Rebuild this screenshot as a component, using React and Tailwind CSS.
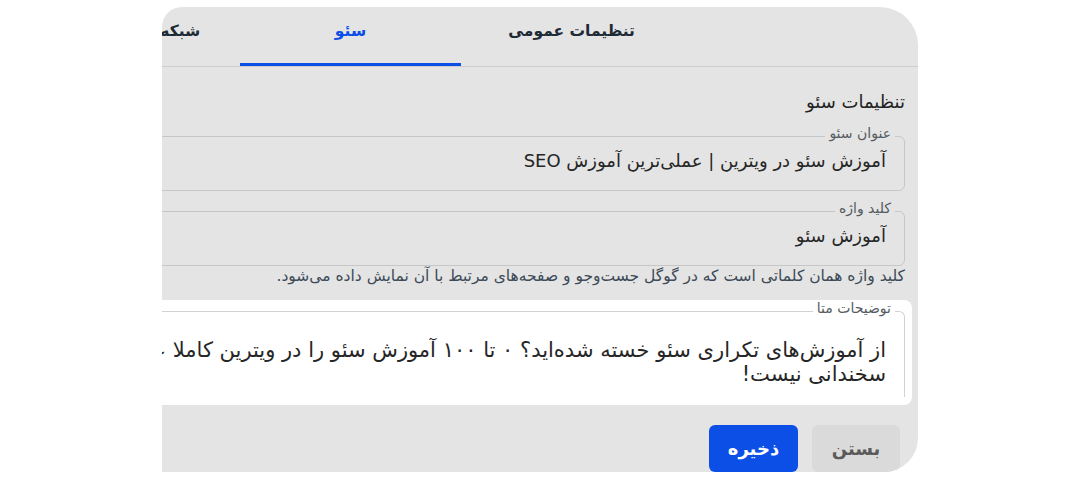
import React from "react";

const Field = ({ label, value }) => (
  <fieldset className="border border-[#c6c6c6] rounded-[6px] px-[18px] pt-[0px] pb-[15px]">
    <legend className="-mr-[9px] px-[4px] pb-[6px] text-[14px] leading-[16px] text-[#555b61]">{label}</legend>
    <div className="text-[18px] leading-[28px] text-[#262626] whitespace-nowrap">{value}</div>
  </fieldset>
);

export default function App() {
  return (
    <div className="w-[1080px] h-[480px] bg-white pt-[7px] pl-[162px] font-['DejaVu_Sans',sans-serif]">
      <div dir="rtl" className="w-[756px] h-[465px] bg-[#e4e4e4] rounded-tl-[20px] rounded-tr-[38px] rounded-br-[34px] overflow-hidden">
        {/* tabs */}
        <div className="w-[1200px] h-[60px] border-b border-[#cdcdcd] flex pr-[236px]">
          <div className="w-[221px] h-[59px] flex items-center justify-center pb-[10px] text-[15.5px] font-bold text-[#1e2a36]">
            تنظیمات عمومی
          </div>
          <div className="w-[221px] h-[59px] flex items-center justify-center pb-[7px] border-b-[3px] border-[#0b4fe7] text-[15.5px] font-bold text-[#0b4fe7]">
            سئو
          </div>
          <div className="w-[221px] h-[59px] flex items-center justify-center pb-[10px] text-[15.5px] font-bold text-[#1e2a36] whitespace-nowrap">
            شبکه‌های اجتماعی
          </div>
        </div>

        <div className="w-[1100px] pr-[13px]">
          <div className="mt-[22px] text-[18px] leading-[26px] text-[#222]">تنظیمات سئو</div>

          <div className="mt-[10px]">
            <Field label="عنوان سئو" value="آموزش سئو در ویترین | عملی‌ترین آموزش SEO" />
          </div>
          <div className="mt-[9px]">
            <Field label="کلید واژه" value="آموزش سئو" />
          </div>
          <div className="text-[15.5px] leading-[20px] text-[#3c4a57] whitespace-nowrap">
            کلید واژه همان کلماتی است که در گوگل جست‌وجو و صفحه‌های مرتبط با آن نمایش داده می‌شود.
          </div>

          <div className="mt-[14px] bg-white rounded-[8px] h-[105px] pr-[7px] -mr-[7px]">
            <fieldset className="h-[97px] border border-[#d2d2d2] border-b-0 rounded-t-[6px] px-[18px] pt-[16px]">
              <legend className="-mr-[9px] px-[4px] pb-[6px] text-[14px] leading-[16px] text-[#555b61]">توضیحات متا</legend>
              <div className="text-[21px] leading-[24px] text-[#262626]">
                <div className="whitespace-nowrap">از آموزش‌های تکراری سئو خسته شده‌اید؟ ۰ تا ۱۰۰ آموزش سئو را در ویترین کاملا عملی یاد بگیرید؛ اینجا جای</div>
                <div className="whitespace-nowrap">سخندانی نیست!</div>
              </div>
            </fieldset>
          </div>

          <div className="mt-[20px] flex gap-[14px] pr-[5px]">
            <button className="w-[88px] h-[47px] rounded-[6px] bg-[#dadada] text-[18px] font-bold text-[#5a5a5a]">بستن</button>
            <button className="w-[89px] h-[47px] rounded-[6px] bg-[#0b4fe7] text-[18px] font-bold text-white">ذخیره</button>
          </div>
        </div>
      </div>
    </div>
  );
}
